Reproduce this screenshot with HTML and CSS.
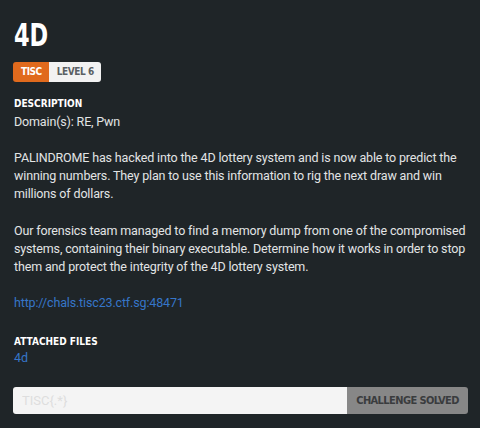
FILE: index.html
```html
<!DOCTYPE html>
<html>
<head>
<meta charset="utf-8">
<link rel="stylesheet" href="styles.css">
</head>
<body>
<main class="chal">
  <h1 class="title"><span class="title-text">4D</span></h1>
  <div class="badges"><span class="badge badge-cat">TISC</span><span class="badge badge-level">LEVEL 6</span></div>
  <h2 class="label label-desc">DESCRIPTION</h2>
  <div class="desc">
    <p>Domain(s): RE, Pwn</p>
    <p>PALINDROME has hacked into the 4D lottery system and is now able to predict the winning numbers. They plan to use this information to rig the next draw and win millions of dollars.</p>
    <p>Our forensics team managed to find a memory dump from one of the compromised systems, containing their binary executable. Determine how it works in order to stop them and protect the integrity of the 4D lottery system.</p>
    <p><a class="link" href="#">http://chals.tisc23.ctf.sg:48471</a></p>
  </div>
  <h2 class="label label-files">ATTACHED FILES</h2>
  <a class="link file" href="#">4d</a>
  <form class="submit">
    <input class="flag" type="text" placeholder="TISC{.*}">
    <button class="solved" type="button">CHALLENGE SOLVED</button>
  </form>
</main>
</body>
</html>
```
FILE: styles.css
```css
html, body {
  margin: 0;
  padding: 0;
  background: #1f2528;
}
body {
  font-family: Roboto, "Liberation Sans", sans-serif;
  font-size: 12.5px;
  color: #e2e4e5;
}
.chal {
  padding: 15px 12px 0 14px;
  display: flex;
  flex-direction: column;
  align-items: flex-start;
}
.title {
  margin: 0;
  font-family: "DejaVu Sans", sans-serif;
  font-stretch: condensed;
  font-weight: bold;
  font-size: 32px;
  line-height: 40px;
  height: 40px;
  color: #ffffff;
}
.title-text {
  display: inline-block;
  transform: scaleX(0.78);
  transform-origin: left center;
}
.badges {
  display: flex;
  margin-top: 7px;
  margin-left: -1px;
  border-radius: 3px;
  overflow: hidden;
}
.badge {
  font-family: "DejaVu Sans", sans-serif;
  font-stretch: condensed;
  font-weight: bold;
  font-size: 10px;
  letter-spacing: -0.45px;
  line-height: 20px;
  height: 20px;
}
.badge-cat {
  background: #e06a1d;
  color: #ffffff;
  padding: 0 7px 0 8px;
}
.badge-level {
  background: #f2f2f2;
  color: #5a5f63;
  padding: 0 7px 0 8px;
}
.label {
  margin: 15px 0 0 0;
  font-family: "DejaVu Sans", sans-serif;
  font-stretch: condensed;
  font-weight: bold;
  font-size: 10px;
  line-height: 14px;
  color: #ffffff;
}
.desc {
  margin-top: 1.5px;
  letter-spacing: -0.15px;
}
.desc p {
  margin: 0 0 18.2px 0;
  line-height: 18.2px;
}
.desc p:last-child {
  margin-bottom: 0;
}
.link {
  color: #3676c8;
  text-decoration: none;
}
.label-files {
  margin-top: 22px;
}
.file {
  line-height: 18.2px;
}
.submit {
  display: flex;
  margin-top: 20px;
  margin-left: -1px;
  width: 455px;
  height: 27px;
}
.flag {
  flex: 1;
  min-width: 0;
  border: none;
  background: #f4f4f4;
  border-radius: 3px 0 0 3px;
  font-family: Roboto, sans-serif;
  font-size: 13px;
  padding: 0 9px;
  outline: none;
}
.flag::placeholder {
  color: #dedede;
}
.solved {
  flex: none;
  border: none;
  background: #878787;
  color: #3a3c3e;
  border-radius: 0 3px 3px 0;
  font-family: "DejaVu Sans", sans-serif;
  font-stretch: condensed;
  font-weight: bold;
  font-size: 11px;
  letter-spacing: -0.6px;
  width: 121px;
  padding: 0;
}
```
